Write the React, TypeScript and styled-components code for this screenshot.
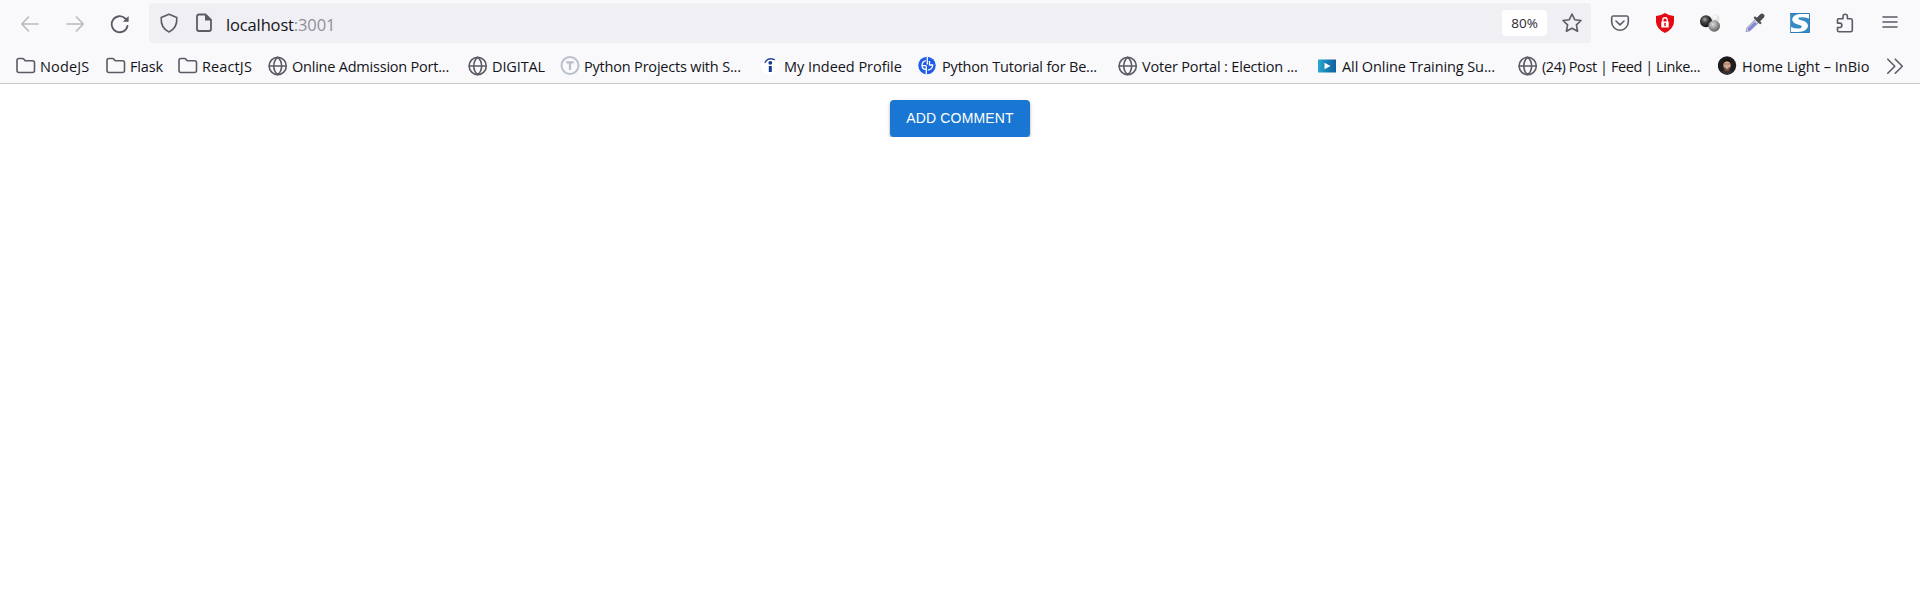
import React from "react";
import styled, { createGlobalStyle } from "styled-components";

const Global = createGlobalStyle`
  * { box-sizing: border-box; }
  body { margin: 0; background: #fff; font-family: "Open Sans", "Noto Sans", sans-serif; color: #15141a; overflow: hidden; }
`;

const Chrome = styled.header`
  height: 84px;
  background: #f9f9fb;
  border-bottom: 1px solid #c8c8cb;
`;
const NavBar = styled.div`
  height: 46px;
  display: flex;
  align-items: center;
  padding-left: 19px;
`;
const NavButton = styled.span<{ $dim?: boolean; $w: number }>`
  width: ${(p) => p.$w}px;
  padding-top: 1px;
  display: flex;
  opacity: ${(p) => (p.$dim ? 0.4 : 1)};
  color: #5b5b66;
`;
const AddressBar = styled.div`
  width: 1442px;
  height: 40px;
  padding: 0 9px 0 10px;
  display: flex;
  align-items: center;
  border-radius: 4px;
  background: #f0f0f4;
  color: #5b5b66;
`;
const PageIcon = styled.span`
  display: flex;
  margin-left: 15px;
`;
const Url = styled.span`
  flex: 1;
  margin: 4px 0 0 12px;
  font-size: 16.5px;
  line-height: 24px;
  letter-spacing: -0.14px;
  color: #15141a;
  span { color: #8f8f99; }
`;
const Zoom = styled.span`
  width: 45px;
  height: 26px;
  margin-right: 15px;
  border-radius: 4px;
  background: #fff;
  color: #2b2a33;
  font-size: 13.5px;
  letter-spacing: 0;
  line-height: 27px;
  text-align: center;
`;
const Extensions = styled.div`
  display: grid;
  grid-template-columns: repeat(7, 45px);
  justify-items: center;
  margin-left: 6.5px;
  color: #5b5b66;
`;
const Bookmarks = styled.nav`
  height: 37px;
  display: flex;
  align-items: center;
  padding: 3px 0 0 16px;
  color: #5b5b66;
`;
const Bookmark = styled.a<{ $w: number }>`
  width: ${(p) => p.$w}px;
  display: flex;
  align-items: center;
  gap: 4px;
  flex: none;
`;
const Label = styled.span<{ $track: number }>`
  padding-top: 2px;
  color: #15141a;
  font-size: 14.5px;
  line-height: 22px;
  letter-spacing: ${(p) => p.$track}px;
  white-space: nowrap;
`;
const Page = styled.main`
  display: flex;
  justify-content: center;
  padding-top: 16px;
`;
const AddButton = styled.button`
  width: 140px;
  height: 37px;
  padding: 0;
  border: 0;
  border-radius: 4px;
  background: #1976d2;
  color: #fff;
  font: 400 14px/37px "Liberation Sans", Arial, sans-serif;
  letter-spacing: 0.17px;
  box-shadow: 0 2px 3px -1px rgba(0,0,0,.3), 0 2px 2px rgba(0,0,0,.16), 0 1px 5px rgba(0,0,0,.12);
`;

const Icon = ({ children, s = 20, sw = 1.6 }: { children: React.ReactNode; s?: number; sw?: number }) => (
  <svg width={s} height={s} viewBox="0 0 20 20" fill="none" stroke="currentColor" strokeWidth={sw} strokeLinecap="round" strokeLinejoin="round">{children}</svg>
);
const Folder = () => <Icon><path d="M1 15V4.500Q1 2.500 3 2.500H6.500Q7.500 2.500 8 3.200L9.200 4.700H16.500Q18.500 4.700 18.500 6.700V14.500Q18.500 16.500 16.500 16.500H3Q1 16.500 1 14.500Z" /></Icon>;
const Globe = () => <Icon><circle cx="9.700" cy="10" r="8.600" /><path d="M1.200 10H18.200M9.700 1.400C4.500 5.500 4.500 14.500 9.700 18.600M9.700 1.400C14.900 5.500 14.900 14.500 9.700 18.600" /></Icon>;
const TLogo = () => <Icon sw={1.9}><g stroke="#b9bfcc"><circle cx="10" cy="9.500" r="8.500" /><path d="M6.300 6.400H13.700M10 6.500V14" strokeWidth="2.200" strokeLinecap="butt" /></g></Icon>;
const Indeed = () => <Icon><circle cx="10" cy="10" r="9" fill="#fff" stroke="none" /><path d="M5 6.500Q8 1 14.500 3.600" stroke="#2a4796" strokeWidth="1.300" /><circle cx="10.300" cy="6.800" r="1.900" fill="#143a93" stroke="none" /><path d="M10.300 10V16" stroke="#143a93" strokeWidth="3" strokeLinecap="butt" /></Icon>;
const PyTutorial = () => (
  <Icon><circle cx="9" cy="9.500" r="8.700" fill="#1f5ce6" stroke="none" /><g stroke="#fff" strokeWidth="1.300" strokeLinecap="butt"><path d="M9.300 .8V8.500M8.300 10V18M7.800 4.700Q4 5.500 4 9.500Q4 13 7.800 13.500M4.500 9.700H8.300M11.500 5V9H14.800Q14.300 13.500 9.800 14.200" /></g></Icon>
);
const Video = () => (
  <Icon><defs><linearGradient id="video" x1="0" x2="1"><stop stopColor="#2aa9cf" /><stop offset=".55" stopColor="#147cb4" /><stop offset="1" stopColor="#155f9b" /></linearGradient></defs><path d="M0 3.500H18V16.500H0Z" fill="url(#video)" stroke="none" /><path d="M6.500 6.800V13.300L12.500 10Z" fill="#fff" stroke="none" /></Icon>
);
const Portrait = () => (
  <Icon><g stroke="none"><circle cx="9" cy="9.500" r="9.200" fill="#201d1e" /><path d="M3 16.300Q5 13.500 9 13.700T15 16.300Q9 21 3 16.300Z" fill="#3b3030" /><ellipse cx="9" cy="9" rx="3.700" ry="5.300" fill="#d3a68f" /><path d="M5.200 8Q4.500 3 9 2.800T12.800 8Q11.800 5.200 9 5.200T5.200 8Z" fill="#17110f" /><path d="M5.700 11Q9 12.500 12.300 11Q12 15 9 15T5.700 11Z" fill="#7b5446" /><path d="M7.300 11.500H10.700L9 12.800Z" fill="#f4ded6" /></g><path d="M5.900 8H8.300M9.700 8H12.100" stroke="#7d5749" strokeWidth=".7" /></Icon>
);

const Pocket = () => <Icon><path d="M3 3H17Q18.300 3 18.300 4.700V9A8.300 8.200 0 0 1 1.700 9V4.700Q1.700 3 3 3Z" /><path d="M6 8L10 11.800L14 8" /></Icon>;
const LockShield = () => (
  <Icon><path d="M10 0Q13.500 2.500 19 3V9Q18.500 16 10 20Q1.500 16 1 9V3Q6.500 2.500 10 0Z" fill="#e50914" stroke="none" /><path d="M6.300 8.500H13.700V14.500H6.300Z" fill="#fff" stroke="none" /><path d="M7.800 9V7Q7.800 4.800 10 4.800T12.200 7V9" stroke="#fff" strokeWidth="1.400" /><path d="M10 10.500V12.500" stroke="#e50914" strokeWidth="1.500" /></Icon>
);
const Spheres = () => (
  <Icon><defs>
    <radialGradient id="dark" cx=".4" cy=".35" r=".65"><stop stopColor="#aaa" /><stop offset=".4" stopColor="#444" /><stop offset="1" stopColor="#111" /></radialGradient>
    <radialGradient id="grey" cx=".4" cy=".35" r=".7"><stop stopColor="#ddd" /><stop offset=".5" stopColor="#999" /><stop offset="1" stopColor="#555" /></radialGradient>
    <radialGradient id="pale" cx=".4" cy=".35" r=".7"><stop stopColor="#fff" /><stop offset="1" stopColor="#d5d5d7" /></radialGradient>
  </defs><g stroke="none"><circle cx="15.500" cy="5" r="3.800" fill="url(#pale)" /><circle cx="6" cy="8.300" r="6" fill="url(#dark)" /><circle cx="14.200" cy="13" r="5.800" fill="url(#grey)" /></g></Icon>
);
const Dropper = () => (
  <Icon><path d="M11 6L1.800 15.500L1.200 18.500L4.200 18L14 9" fill="#dfe1f4" stroke="#a3a5b5" strokeWidth="1.100" /><path d="M10 10.500L4 16.500" stroke="#7c87dc" strokeWidth="2.600" /><path d="M10 4.700L15.300 10" stroke="#55555a" strokeWidth="2.400" /><path d="M13.500 6.500L17 3" stroke="#4b4b50" strokeWidth="4.800" /></Icon>
);
const SLogo = () => (
  <Icon><path d="M.5.5H19.500V19.500H.5Z" fill="#378bc4" stroke="#347db4" strokeWidth="1" /><path d="M19 1V5.500Q13 3.500 9 4.600Q7 6 10.500 7Q18 8.500 18 13Q17.500 18.500 8 19H1V14Q7 16.500 11 15Q13 13 9.500 12Q2 10.500 2.200 6Q3 2 9 1Z" fill="#fff" stroke="none" /></Icon>
);
const Puzzle = () => <Icon><path d="M3.500 5.800H8V3.500A2.200 2.200 0 0 1 12.400 3.500V5.800H15.700Q17.300 5.800 17.300 7.400V17.200Q17.300 18.800 15.700 18.800H4.100Q2.500 18.800 2.500 17.200V14.500H4.700A2.200 2.200 0 0 0 4.700 10.100H2.500V6.800Q2.500 5.800 3.500 5.800Z" /></Icon>;
const Menu = () => <Icon><path d="M3 4H17M3 9H17M3 14H17" /></Icon>;
const Chevrons = () => <Icon><path d="M2.800 3.200L9.800 10.200L2.800 17.200M10.300 3.200L17.300 10.200L10.300 17.200" /></Icon>;

const bookmarks: [string, number, number, () => React.ReactElement][] = [
  ["NodeJS", 90, 0.15, Folder],
  ["Flask", 72, -0.15, Folder],
  ["ReactJS", 90, 0.12, Folder],
  ["Online Admission Port...", 200, -0.22, Globe],
  ["DIGITAL", 92, -0.12, Globe],
  ["Python Projects with S...", 200, -0.19, TLogo],
  ["My Indeed Profile", 158, -0.04, Indeed],
  ["Python Tutorial for Be...", 200, -0.18, PyTutorial],
  ["Voter Portal : Election ...", 200, -0.18, Globe],
  ["All Online Training Su...", 200, -0.1, Video],
  ["(24) Post | Feed | Linke...", 200, -0.42, Globe],
  ["Home Light – InBio", 167, 0, Portrait],
];

export default function App() {
  return (
    <>
      <Global />
      <Chrome>
        <NavBar>
          <NavButton $dim $w={45}><Icon><path d="M3 10H19M9.500 3L2.800 10L9.500 17" /></Icon></NavButton>
          <NavButton $dim $w={45}><Icon><path d="M3 10H19M12.500 3L19.200 10L12.500 17" /></Icon></NavButton>
          <NavButton $w={40}><Icon sw={1.8}><path d="M18.500 12A8 8 0 1 1 16.300 4.500L18.300 6.500" /><path d="M19.600 2V7.800H13.800Z" fill="currentColor" stroke="none" /></Icon></NavButton>
          <AddressBar>
            <Icon><path d="M10 1.200L17.800 4.500C18.200 11 15.500 16.500 10 18.900C4.500 16.500 1.800 11 2.200 4.500Z" /></Icon>
            <PageIcon><Icon sw={1.8}><path d="M11.500 1.500H5Q3 1.500 3 3.500V16Q3 18 5 18H15Q17 18 17 16V7Z" /><path d="M11 1V7.500H17.500Z" fill="currentColor" stroke="none" /></Icon></PageIcon>
            <Url>localhost<span>:3001</span></Url>
            <Zoom>80%</Zoom>
            <Icon><path d="M10 1L12.700 6.700L19 7.500L14.400 11.900L15.600 18.200L10 15.200L4.400 18.200L5.600 11.900L1 7.500L7.300 6.700Z" /></Icon>
          </AddressBar>
          <Extensions><Pocket /><LockShield /><Spheres /><Dropper /><SLogo /><Puzzle /><Menu /></Extensions>
        </NavBar>
        <Bookmarks>
          {bookmarks.map(([name, w, track, Pic]) => (
            <Bookmark key={name} $w={w}><Pic /><Label $track={track}>{name}</Label></Bookmark>
          ))}
          <Chevrons />
        </Bookmarks>
      </Chrome>
      <Page><AddButton>ADD COMMENT</AddButton></Page>
    </>
  );
}
